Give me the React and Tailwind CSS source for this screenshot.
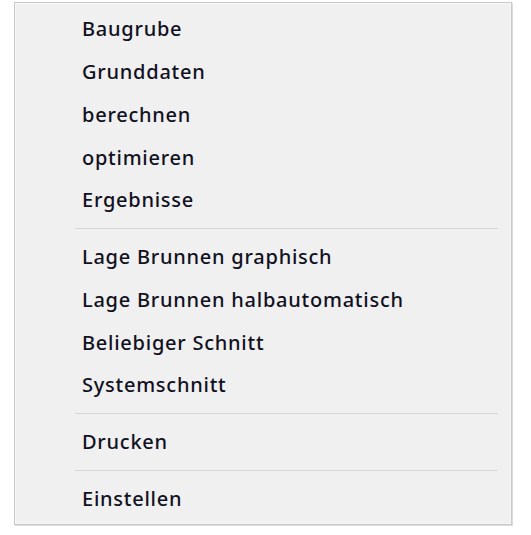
import React from 'react';

const groups = [
  ['Baugrube', 'Grunddaten', 'berechnen', 'optimieren', 'Ergebnisse'],
  ['Lage Brunnen graphisch', 'Lage Brunnen halbautomatisch', 'Beliebiger Schnitt', 'Systemschnitt'],
  ['Drucken'],
  ['Einstellen'],
];

export default function App() {
  return (
    <div className="w-[531px] h-[535px] bg-white pt-[2px] pl-[14px]">
      {/* Context menu */}
      <div className="w-[498px] h-[523px] border border-[#c9c9c9] bg-[#f0f0f0] shadow-[1px_1px_0_#dcdcdc]">
        <div className="h-full border border-[#f7f7f7] pt-[4px] pb-[6px] pr-[12px]">
          {groups.map((items, gi) => (
            <div key={gi}>
              {gi > 0 && (
                <div className="h-[14px] flex items-center pl-[59px]">
                  <div className="w-full h-px bg-[#d7d7d7]" />
                </div>
              )}
              {items.map((label) => (
                <div
                  key={label}
                  className="h-[42.75px] flex items-center pl-[66px] text-[20px] font-medium tracking-[0.75px] text-[#111122] font-['Noto_Sans',sans-serif]"
                >
                  {label}
                </div>
              ))}
            </div>
          ))}
        </div>
      </div>
    </div>
  );
}
